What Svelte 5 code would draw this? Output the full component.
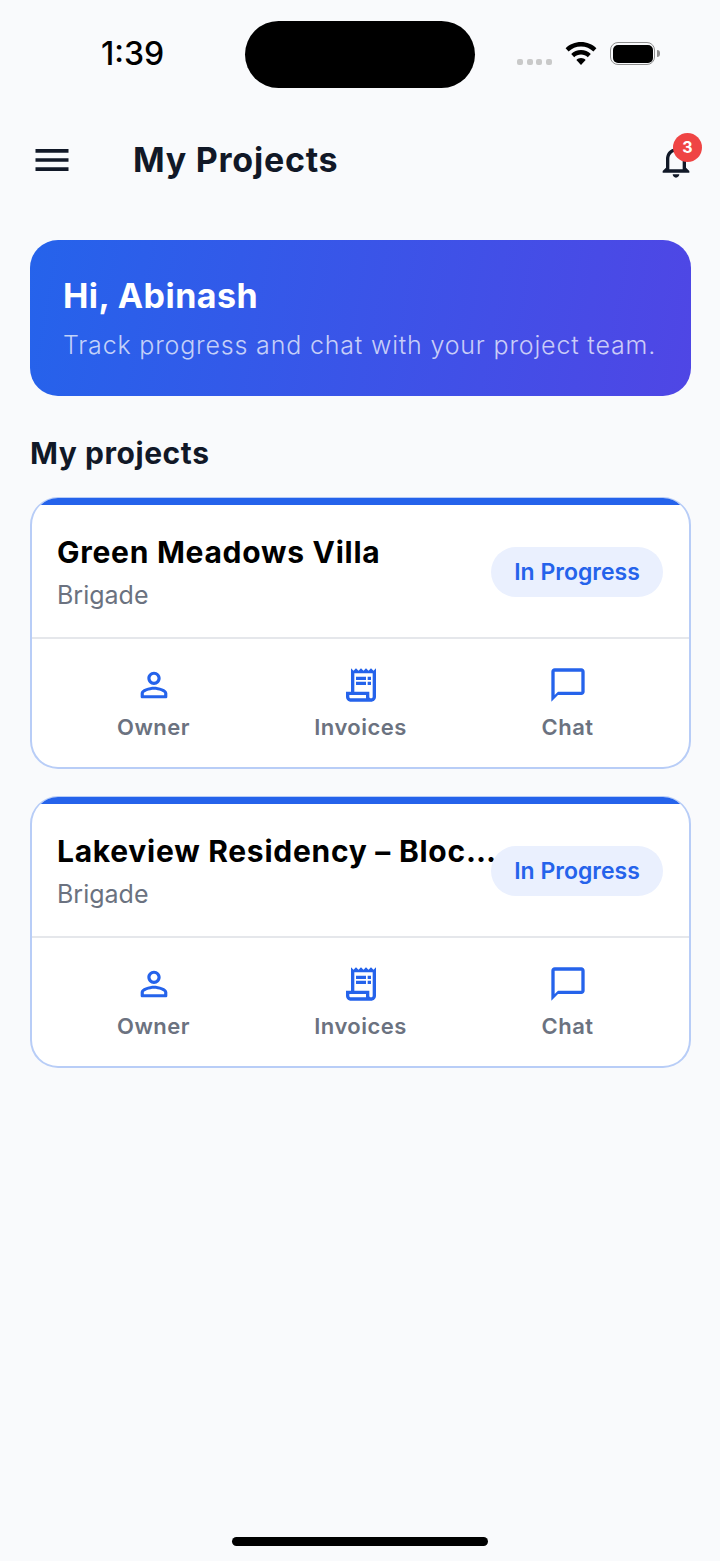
<script>
  const projects = [
    { name: 'Green Meadows Villa', org: 'Brigade' },
    { name: 'Lakeview Residency – Block A', org: 'Brigade' }
  ];
</script>

<div class="page">
  <div class="status">
    <span class="time">1:39</span>
    <div class="island"></div>
    <div class="sys">
      <div class="dots"><i></i><i></i><i></i><i></i></div>
      <svg class="wifi" width="32" height="24" viewBox="0 0 32 24"><path d="M16 0C10 0 4.600 2.300.6 6.200l3 3.300C6.800 6.400 11.200 4.500 16 4.500s9.200 1.900 12.400 5l3-3.300C27.400 2.300 22 0 16 0z"/><path d="M16 8c-3.800 0-7.300 1.500-9.800 4l3 3.300c1.800-1.800 4.200-2.800 6.800-2.800s5 1 6.800 2.800l3-3.300c-2.500-2.500-6-4-9.800-4z"/><path d="M16 16c-1.800 0-3.400.7-4.600 1.900L16 23l4.600-5.100C19.400 16.700 17.800 16 16 16z"/></svg>
      <div class="battery"><div class="cell"></div></div>
      <div class="tip"></div>
    </div>
  </div>

  <header class="top">
    <svg class="menu" width="44" height="44" viewBox="0 0 24 24"><path d="M3 18h18v-2H3v2zm0-5h18v-2H3v2zm0-5h18V6H3v2z"/></svg>
    <h1>My Projects</h1>
    <div class="bell">
      <svg width="40" height="40" viewBox="0 0 24 24"><path d="M12 22c1.100 0 2-.9 2-2h-4c0 1.100.89 2 2 2zm6-6v-5c0-3.070-1.640-5.640-4.500-6.320V4c0-.83-.67-1.500-1.500-1.500s-1.500.67-1.500 1.500v.68C7.630 5.360 6 7.920 6 11v5l-2 2v1h16v-1l-2-2zm-2 1H8v-6c0-2.480 1.510-4.500 4-4.500s4 2.020 4 4.500v6z"/></svg>
      <span class="badge">3</span>
    </div>
  </header>

  <section class="hero">
    <div class="hi">Hi, Abinash</div>
    <div class="sub">Track progress and chat with your project team.</div>
  </section>

  <h2>My projects</h2>

  {#each projects as p}
    <article class="card">
      <div class="bar"></div>
      <div class="head">
        <div class="info">
          <div class="name">{p.name}</div>
          <div class="org">{p.org}</div>
        </div>
        <span class="pill">In Progress</span>
      </div>
      <div class="actions">
        <div class="action">
          <svg width="40" height="40" viewBox="0 0 24 24"><path d="M12 5.900c1.160 0 2.100.94 2.100 2.100s-.94 2.100-2.100 2.100S9.900 9.160 9.900 8s.94-2.100 2.100-2.100m0 9c2.970 0 6.100 1.460 6.100 2.100v1.100H5.900V17c0-.64 3.130-2.100 6.100-2.100M12 4C9.790 4 8 5.790 8 8s1.790 4 4 4 4-1.790 4-4-1.790-4-4-4zm0 9c-2.670 0-8 1.340-8 4v2c0 .55.45 1 1 1h14c.55 0 1-.45 1-1v-2c0-2.660-5.330-4-8-4z"/></svg>
          <span>Owner</span>
        </div>
        <div class="action">
          <svg width="40" height="40" viewBox="0 0 24 24"><path fill-rule="evenodd" d="M19.500 3.500 18 2l-1.500 1.500L15 2l-1.500 1.500L12 2l-1.500 1.500L9 2 7.500 3.500 6 2v14H3v3c0 1.660 1.340 3 3 3h12c1.660 0 3-1.340 3-3V2l-1.500 1.500zM15 20H6c-.55 0-1-.45-1-1v-1h10v2zm4-1c0 .55-.45 1-1 1s-1-.45-1-1v-3H8V5h11v14z"/><path d="M9 7h6v2H9zm7 0h2v2h-2zm-7 3h6v2H9zm7 0h2v2h-2z"/></svg>
          <span>Invoices</span>
        </div>
        <div class="action">
          <svg width="40" height="40" viewBox="0 0 24 24"><path d="M20 2H4c-1.100 0-2 .9-2 2v18l4-4h14c1.100 0 2-.9 2-2V4c0-1.100-.9-2-2-2zm0 14H6l-2 2V4h16v12z"/></svg>
          <span>Chat</span>
        </div>
      </div>
    </article>
  {/each}

  <div class="home"></div>
</div>

<style>
  :global(body) { margin: 0; background: #f9fafc; }
  .page {
    width: 720px;
    height: 1561px;
    box-sizing: border-box;
    background: #f9fafc;
    display: flex;
    flex-direction: column;
    font-family: Inter, "Noto Sans", sans-serif;
    overflow: hidden;
  }
  .status {
    height: 108px;
    flex: none;
    position: relative;
  }
  .time {
    position: absolute;
    left: 101px;
    top: 34px;
    font-size: 32px;
    line-height: 40px;
    font-weight: 500;
    color: #000;
  }
  .island {
    position: absolute;
    left: 245px;
    top: 21px;
    width: 230px;
    height: 67px;
    border-radius: 34px;
    background: #000;
  }
  .sys { position: absolute; left: 517px; top: 42px; width: 144px; height: 24px; }
  .dots { position: absolute; left: 0; top: 17px; display: flex; gap: 3.700px; }
  .dots i { display: block; width: 6px; height: 6px; border-radius: 2px; background: #c9c9c9; }
  .wifi { position: absolute; left: 48px; top: 0; fill: #000; }
  .battery {
    position: absolute;
    left: 93px;
    top: 0;
    width: 45px;
    height: 23px;
    box-sizing: border-box;
    border: 1.500px solid #8e8e8e;
    border-radius: 8px;
    padding: 1.500px;
  }
  .cell { width: 100%; height: 100%; background: #000; border-radius: 5px; }
  .tip {
    position: absolute;
    left: 140px;
    top: 8px;
    width: 3px;
    height: 7px;
    background: #8e8e8e;
    border-radius: 0 3px 3px 0;
  }
  .top {
    height: 104px;
    flex: none;
    padding: 0 24px 0 30px;
    display: flex;
    align-items: center;
    box-sizing: border-box;
  }
  .menu { fill: #111827; flex: none; margin-right: 59px; }
  h1 {
    flex: 1;
    margin: 0;
    font-size: 34px;
    line-height: 44px;
    letter-spacing: .75px;
    font-weight: 700;
    color: #111827;
  }
  .bell { position: relative; width: 40px; height: 40px; fill: #111827; margin-top: 2px; }
  .bell svg { display: block; }
  .badge {
    position: absolute;
    left: 17px;
    top: -8px;
    width: 29px;
    height: 29px;
    border-radius: 50%;
    background: #ef4444;
    color: #fff;
    font-size: 16px;
    font-weight: 700;
    line-height: 29px;
    text-align: center;
  }
  .hero {
    flex: none;
    margin: 28px 29px 0 30px;
    height: 156px;
    box-sizing: border-box;
    border-radius: 28px;
    background: linear-gradient(100deg, #2563eb, #4f46e5);
    padding: 33px 0 0 33px;
    color: #fff;
  }
  .hi { font-size: 34px; line-height: 46px; letter-spacing: .45px; font-weight: 700; }
  .sub { font-size: 25px; line-height: 36px; margin-top: 8px; letter-spacing: .82px; font-weight: 300; color: rgba(255,255,255,.72); }
  h2 {
    flex: none;
    margin: 37px 0 0 30px;
    height: 40px;
    font-size: 30px;
    line-height: 40px;
    letter-spacing: .55px;
    font-weight: 700;
    color: #111827;
  }
  .card {
    flex: none;
    margin: 24px 29px 0 30px;
    height: 272px;
    box-sizing: border-box;
    border: 2px solid #b8cdf7;
    border-top-width: 1px;
    border-radius: 28px;
    background: #fff;
    overflow: hidden;
    display: flex;
    flex-direction: column;
  }
  .card + .card { margin-top: 27px; }
  .bar { height: 7px; background: #2563eb; flex: none; }
  .head {
    flex: none;
    height: 134px;
    box-sizing: border-box;
    border-bottom: 2px solid #e5e7eb;
    display: flex;
    align-items: center;
    padding: 2px 26px 0 25px;
  }
  .info { flex: 1; min-width: 0; margin-right: -5px; }
  .name {
    font-size: 30px;
    line-height: 40px;
    letter-spacing: .73px;
    font-weight: 700;
    color: #000;
    white-space: nowrap;
    overflow: hidden;
    text-overflow: ellipsis;
  }
  .org { font-size: 25px; line-height: 34px; margin-top: 6px; color: #6b7280; }
  .pill {
    flex: none;
    position: relative;
    width: 172px;
    height: 50px;
    border-radius: 25px;
    background: #eaf0fe;
    color: #2563eb;
    font-size: 23px;
    font-weight: 600;
    line-height: 50px;
    text-align: center;
  }
  .actions {
    flex: 1;
    display: grid;
    grid-template-columns: repeat(3, 207px);
    justify-content: center;
    padding-top: 26px;
    box-sizing: border-box;
  }
  .action { display: flex; flex-direction: column; align-items: center; }
  .action svg { fill: #2563eb; display: block; }
  .action span {
    margin-top: 5px;
    font-size: 22px;
    line-height: 34px;
    letter-spacing: .45px;
    font-weight: 600;
    color: #6b7280;
  }
  .home {
    margin: auto auto 15px;
    width: 256px;
    height: 9px;
    border-radius: 5px;
    background: #000;
    flex: none;
  }
</style>
